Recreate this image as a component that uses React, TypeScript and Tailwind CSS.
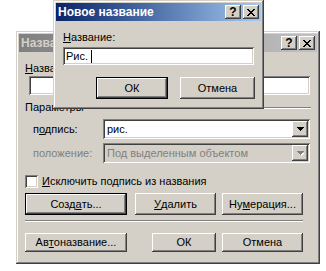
import React from "react";

const frame =
  "shadow-[inset_-1px_-1px_0_#404040,inset_1px_1px_0_#d4d0c8,inset_-2px_-2px_0_#808080,inset_2px_2px_0_#ffffff]";
const raised =
  "shadow-[inset_-1px_-1px_0_#404040,inset_1px_1px_0_#ffffff,inset_-2px_-2px_0_#808080]";
const sunken =
  "shadow-[inset_1px_1px_0_#808080,inset_-1px_-1px_0_#ffffff,inset_2px_2px_0_#404040,inset_-2px_-2px_0_#d4d0c8]";

function U({ children }: { children: React.ReactNode }) {
  return <span className="underline underline-offset-[1px]">{children}</span>;
}

function TitleButton({ kind }: { kind: "help" | "close" }) {
  return (
    <div
      className={`w-[16px] h-[14px] bg-[#d4d0c8] ${raised} flex items-center justify-center`}
    >
      {kind === "help" ? (
        <span className="text-[12px] font-bold leading-none text-black -mt-[1px]">?</span>
      ) : (
        <svg width="8" height="7" viewBox="0 0 8 7">
          <path d="M0 0h2v1h1v1h2v-1h1v-1h2v1h-1v1h-1v1h-1v1h1v1h1v1h1v1h-2v-1h-1v-1h-2v1h-1v1h-2v-1h1v-1h1v-1h1v-1h-1v-1h-1v-1h-1z" fill="#000" />
        </svg>
      )}
    </div>
  );
}

function TitleBar({ title, active }: { title: string; active: boolean }) {
  return (
    <div
      className={`h-[18px] flex items-center justify-between pl-[2px] pr-[2px] ${
        active
          ? "bg-gradient-to-r from-[#0a246a] to-[#a6caf0] text-white"
          : "bg-gradient-to-r from-[#808080] to-[#c0c0c0] text-[#d4d0c8]"
      }`}
    >
      <span className="text-[12px] font-bold leading-none whitespace-nowrap">{title}</span>
      <div className="flex gap-[2px]">
        <TitleButton kind="help" />
        <TitleButton kind="close" />
      </div>
    </div>
  );
}

function Button({
  children,
  width,
  height = "h-[22px]",
  isDefault,
}: {
  children: React.ReactNode;
  width: string;
  height?: string;
  isDefault?: boolean;
}) {
  return (
    <div
      className={`${width} ${height} bg-[#d4d0c8] flex items-center justify-center ${
        isDefault ? "border border-black" : ""
      }`}
    >
      <div className={`w-full h-full flex items-center justify-center ${raised}`}>
        {children}
      </div>
    </div>
  );
}

function Select({ value, disabled }: { value: string; disabled?: boolean }) {
  return (
    <div
      className={`w-[207px] h-[20px] ${disabled ? "bg-[#d4d0c8]" : "bg-white"} ${sunken} p-[2px] flex`}
    >
      <div className={`flex-1 pl-[2px] flex items-center ${disabled ? "text-[#808080]" : "text-black"}`}>
        {value}
      </div>
      <div className={`w-[16px] h-[16px] bg-[#d4d0c8] ${raised} flex items-center justify-center`}>
        <svg width="7" height="5" viewBox="0 0 7 5">
          {disabled && <path d="M2 2h5v1h-1v1h-1v1h-1v-1h-1z" fill="#ffffff" />}
          <path d="M0 0h7v1h-1v1h-1v1h-1v1h-1v-1h-1v-1h-1v-1h-1z" fill={disabled ? "#808080" : "#000"} />
        </svg>
      </div>
    </div>
  );
}

export default function App() {
  return (
    <div className="relative w-[326px] h-[271px] bg-white overflow-hidden font-['Liberation_Sans',Arial,sans-serif] text-[11px] leading-[13px] text-black">
      {/* back dialog */}
      <div className={`absolute left-[16px] top-[31px] w-[304px] h-[233px] bg-[#d4d0c8] p-[3px] ${frame}`}>
        <TitleBar title="Название" active={false} />
        <div className="pl-[6px] pt-[10px]">
          <div>
            <U>Н</U>азвание:
          </div>
          <div className={`ml-[4px] mt-[1px] w-[281px] h-[19px] bg-white ${sunken}`} />
          <div className="mt-[6px] flex items-center">
            <span>Параметры</span>
            <div className="ml-[3px] w-[224px] h-[2px] border-t border-[#808080] border-b border-b-white" />
          </div>
          <div className="mt-[5px] flex items-center">
            <div className="w-[78px] pl-[8px]">
              п<U>о</U>дпись:
            </div>
            <Select value="рис." />
          </div>
          <div className="mt-[4px] flex items-center">
            <div className="w-[78px] pl-[8px] text-[#808080]">положение:</div>
            <Select value="Под выделенным объектом" disabled />
          </div>
          <div className="mt-[12px] flex items-center">
            <div className={`w-[13px] h-[13px] bg-white ${sunken}`} />
            <span className="ml-[4px]">
              <U>И</U>сключить подпись из названия
            </span>
          </div>
          <div className="mt-[5px] flex">
            <Button width="w-[102px]" isDefault>
              Созд<U>а</U>ть...
            </Button>
            <div className="ml-[8px]">
              <Button width="w-[81px]">
                <U>У</U>далить
              </Button>
            </div>
            <div className="ml-[6px]">
              <Button width="w-[81px]">
                Ну<U>м</U>ерация...
              </Button>
            </div>
          </div>
          <div className="mt-[5px] w-[278px] h-[2px] border-t border-[#808080] border-b border-b-white" />
          <div className="mt-[11px] flex">
            <Button width="w-[102px]" height="h-[19px]">
              Ав<U>т</U>оназвание...
            </Button>
            <div className="ml-[25px]">
              <Button width="w-[64px]" height="h-[19px]">ОК</Button>
            </div>
            <div className="ml-[6px]">
              <Button width="w-[81px]" height="h-[19px]">Отмена</Button>
            </div>
          </div>
        </div>
      </div>

      {/* front dialog */}
      <div className={`absolute left-[53px] top-0 w-[211px] h-[109px] bg-[#d4d0c8] p-[3px] ${frame}`}>
        <TitleBar title="Новое название" active />
        <div className="pl-[7px] pt-[10px]">
          <div>
            <U>Н</U>азвание:
          </div>
          <div className={`mt-[3px] w-[191px] h-[18px] bg-white ${sunken} flex items-center pl-[3px]`}>
            <span>Рис.</span>
            <span className="ml-[3px] w-px h-[13px] bg-black" />
          </div>
          <div className="mt-[12px] flex">
            <div className="ml-[33px]">
              <Button width="w-[72px]" isDefault>
                ОК
              </Button>
            </div>
            <div className="ml-[12px]">
              <Button width="w-[75px]">Отмена</Button>
            </div>
          </div>
        </div>
      </div>
    </div>
  );
}
